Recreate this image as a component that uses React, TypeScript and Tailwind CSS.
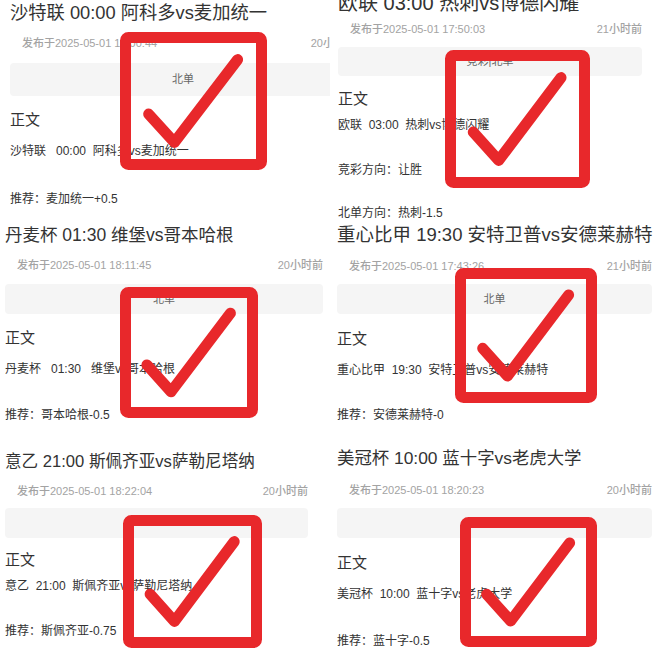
import React from 'react';

type Line = { cls: string; text: string };

type PanelProps = {
    cls: string;
    titleCls: string;
    title: string;
    dateCls: string;
    date: string;
    ago: string;
    boxCls: string;
    tag?: string;
    bodyCls: string;
    lines: Line[];
    checkCls: string;
    cw: number;
    ch: number;
};

// red hand-drawn box with a tick, laid over the screenshot
function Check({ cls, w, h }: { cls: string; w: number; h: number }) {
    const s = 11;
    return (
        <svg className={`absolute ${cls}`} width={w} height={h} viewBox={`0 0 ${w} ${h}`}>
            <rect x={s / 2} y={s / 2} width={w - s} height={h - s} rx={3} fill="none" stroke="#e8282b" strokeWidth={s} />
            <polyline
                points={`${w * 0.195},${h * 0.595} ${w * 0.37},${h * 0.8} ${w * 0.8},${h * 0.2}`}
                fill="none"
                stroke="#e8282b"
                strokeWidth={11}
                strokeLinecap="round"
                strokeLinejoin="round"
            />
        </svg>
    );
}

function Panel(p: PanelProps) {
    return (
        <div className={`relative overflow-hidden ${p.cls}`}>
            <div className={`h-[26px] leading-[26px] text-[#333] whitespace-nowrap ${p.titleCls}`}>{p.title}</div>
            <div className={`flex justify-between h-4 leading-4 pl-3 text-[11px] font-medium text-[#a3a3a3] whitespace-nowrap ${p.dateCls}`}>
                <span>{p.date}</span>
                <span>{p.ago}</span>
            </div>
            <div className={`flex items-center justify-center rounded-[4px] bg-[#f5f5f5] text-[11px] text-[#666] ${p.boxCls}`}>
                {p.tag}
            </div>
            <div className={`h-5 leading-5 text-[15px] text-[#333] ${p.bodyCls}`}>正文</div>
            {p.lines.map((l, i) => (
                <div key={i} className={`h-4 leading-4 text-[12px] text-[#333] whitespace-pre ${l.cls}`}>{l.text}</div>
            ))}
            <Check cls={p.checkCls} w={p.cw} h={p.ch} />
        </div>
    );
}

const left: PanelProps[] = [
    {
        cls: 'h-[215px] pl-[10px]',
        titleCls: 'text-[18.3px]',
        title: '沙特联 00:00 阿科多vs麦加统一',
        dateCls: 'mt-[9px] w-[346px]',
        date: '发布于2025-05-01 18:00:44',
        ago: '20小时前',
        boxCls: 'mt-[12px] w-[346px] h-[33px]',
        tag: '北单',
        bodyCls: 'mt-[14px]',
        lines: [
            { cls: 'mt-[13px]', text: '沙特联   00:00  阿科多vs麦加统一' },
            { cls: 'mt-[32px]', text: '推荐：麦加统一+0.5' },
        ],
        checkCls: 'left-[120px] top-[32px]',
        cw: 147,
        ch: 138,
    },
    {
        cls: 'h-[225px] pl-[5px] pt-[7px]',
        titleCls: 'text-[17.5px]',
        title: '丹麦杯 01:30 维堡vs哥本哈根',
        dateCls: 'mt-[9px] w-[318px]',
        date: '发布于2025-05-01 18:11:45',
        ago: '20小时前',
        boxCls: 'mt-[11px] w-[318px] h-[30px]',
        tag: '北单',
        bodyCls: 'mt-[14px]',
        lines: [
            { cls: 'mt-[13px]', text: '丹麦杯   01:30   维堡vs哥本哈根' },
            { cls: 'mt-[30px]', text: '推荐：哥本哈根-0.5' },
        ],
        checkCls: 'left-[120px] top-[72px]',
        cw: 138,
        ch: 131,
    },
    {
        cls: 'h-[220px] pl-[5px] pt-[9px]',
        titleCls: 'text-[16.6px]',
        title: '意乙 21:00 斯佩齐亚vs萨勒尼塔纳',
        dateCls: 'mt-[8px] w-[303px]',
        date: '发布于2025-05-01 18:22:04',
        ago: '20小时前',
        boxCls: 'mt-[9px] w-[303px] h-[30px]',
        bodyCls: 'mt-[12px]',
        lines: [
            { cls: 'mt-[8px]', text: '意乙  21:00  斯佩齐亚vs萨勒尼塔纳' },
            { cls: 'mt-[29px]', text: '推荐：斯佩齐亚-0.75' },
        ],
        checkCls: 'left-[123px] top-[75px]',
        cw: 139,
        ch: 133,
    },
];

const right: PanelProps[] = [
    {
        cls: 'h-[218px] pl-[8px]',
        titleCls: '-mt-[10px] text-[20px]',
        title: '欧联 03:00 热刺vs博德闪耀',
        dateCls: 'mt-[5px] w-[304px]',
        date: '发布于2025-05-01 17:50:03',
        ago: '21小时前',
        boxCls: 'mt-[10px] w-[304px] h-[29px]',
        tag: '竞彩|北单',
        bodyCls: 'mt-[13px]',
        lines: [
            { cls: 'mt-[8px]', text: '欧联  03:00  热刺vs博德闪耀' },
            { cls: 'mt-[29px]', text: '竞彩方向：让胜' },
            { cls: 'mt-[27px]', text: '北单方向：热刺-1.5' },
        ],
        checkCls: 'left-[115px] top-[50px]',
        cw: 145,
        ch: 138,
    },
    {
        cls: 'h-[222px] pl-[7px] pt-[4px]',
        titleCls: 'text-[18.5px]',
        title: '重心比甲 19:30 安特卫普vs安德莱赫特',
        dateCls: 'mt-[10px] w-[315px]',
        date: '发布于2025-05-01 17:43:26',
        ago: '21小时前',
        boxCls: 'mt-[10px] w-[315px] h-[30px]',
        tag: '北单',
        bodyCls: 'mt-[15px]',
        lines: [
            { cls: 'mt-[13px]', text: '重心比甲  19:30  安特卫普vs安德莱赫特' },
            { cls: 'mt-[29px]', text: '推荐：安德莱赫特-0' },
        ],
        checkCls: 'left-[125px] top-[50px]',
        cw: 142,
        ch: 135,
    },
    {
        cls: 'h-[220px] pl-[7px] pt-[5px]',
        titleCls: 'text-[17.4px]',
        title: '美冠杯 10:00 蓝十字vs老虎大学',
        dateCls: 'mt-[11px] w-[315px]',
        date: '发布于2025-05-01 18:20:23',
        ago: '20小时前',
        boxCls: 'mt-[10px] w-[315px] h-[30px]',
        bodyCls: 'mt-[15px]',
        lines: [
            { cls: 'mt-[13px]', text: '美冠杯  10:00  蓝十字vs老虎大学' },
            { cls: 'mt-[31px]', text: '推荐：蓝十字-0.5' },
        ],
        checkCls: 'left-[130px] top-[77px]',
        cw: 137,
        ch: 130,
    },
];

export default function App() {
    return (
        <div className="w-[660px] h-[660px] overflow-hidden bg-white flex font-['Liberation_Sans','Noto_Sans_CJK_SC',sans-serif]">
            <div className="w-[330px] flex flex-col">
                {left.map((p, i) => <Panel key={i} {...p} />)}
            </div>
            <div className="w-[330px] flex flex-col">
                {right.map((p, i) => <Panel key={i} {...p} />)}
            </div>
        </div>
    );
}
